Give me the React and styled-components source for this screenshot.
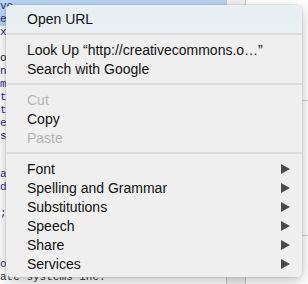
import React from "react";
import styled, { createGlobalStyle } from "styled-components";

const Global = createGlobalStyle`
  html, body { margin: 0; padding: 0; background: #ffffff; }
  #root { width: 308px; height: 284px; }
`;

const Screen = styled.div`
  position: relative;
  width: 308px;
  height: 284px;
  overflow: hidden;
  display: grid;
  grid-template-columns: 226px 20px 1fr;
  background: #ffffff;
`;

const Editor = styled.div`
  display: flex;
  flex-direction: column;
  font-family: "Liberation Mono", "DejaVu Sans Mono", monospace;
  font-size: 11px;
  line-height: 13px;
  white-space: pre;
  overflow: hidden;
`;

const CodeLine = styled.div`
  color: ${(p) => p.$color || "#2a2a8a"};
  background: ${(p) => (p.$selected ? "#b9d6f5" : "transparent")};
  height: 13px;
`;

const Gutter = styled.div`
  background: #f2f2f2;
  border-left: 1px solid #c8c8c8;
  border-right: 1px solid #c8c8c8;
`;

const Side = styled.div`
  display: flex;
  flex-direction: column;
  padding: 16px 0 0 6px;
  font-family: "Liberation Sans", Arial, sans-serif;
  color: #222;
  white-space: nowrap;
  overflow: hidden;
`;

const SideText = styled.div`
  color: ${(p) => p.$color || "#222"};
  margin-top: ${(p) => p.$mt || 0}px;
  font-size: ${(p) => p.$size || 12}px;
  line-height: ${(p) => (p.$size || 12) + 2}px;
  border-top: ${(p) => (p.$rule ? "1px solid #d0d0d0" : "none")};
`;

const Menu = styled.div`
  position: absolute;
  left: 6px;
  top: 5px;
  width: 296px;
  height: 272px;
  box-sizing: border-box;
  padding: 4px 0;
  border-radius: 5px;
  background: linear-gradient(
    to bottom,
    #e7eff2 0px,
    #eaf0f2 29px,
    #efefef 31px,
    #efefef 100%
  );
  box-shadow: 0 0 0 0.5px rgba(0, 0, 0, 0.12), 0 4px 14px rgba(0, 0, 0, 0.25);
  font-family: "Liberation Sans", Helvetica, Arial, sans-serif;
  font-size: 14px;
  display: flex;
  flex-direction: column;
`;

const Item = styled.div`
  height: 19px;
  display: flex;
  align-items: center;
  justify-content: space-between;
  padding: 0 12px 0 21px;
  color: ${(p) => (p.$disabled ? "#b3b3b3" : "#111111")};
  white-space: nowrap;
`;

const Separator = styled.div`
  height: 12px;
  display: flex;
  align-items: center;
  &::after {
    content: "";
    flex: 1;
    height: 2px;
    background: #dcdcdc;
  }
`;

const Arrow = () => (
  <svg width="9" height="10" viewBox="0 0 9 10">
    <path d="M0 0 L9 5 L0 10 Z" fill="#4a4a4a" />
  </svg>
);

const codeLines = [
  { t: "ve", sel: true },
  { t: "e ", sel: true },
  { t: "x3" },
  { t: "" },
  { t: "o ", c: "#222" },
  { t: "nd" },
  { t: "m]" },
  { t: "tb" },
  { t: "tf" },
  { t: "el" },
  { t: "s " },
  { t: "" },
  { t: "" },
  { t: "a " },
  { t: "dc" },
  { t: "" },
  { t: "; " },
  { t: "" },
  { t: "" },
  { t: "" },
  { t: "o " },
  { t: "ate systems inc.", c: "#333" },
];

const items = [
  [{ label: "Open URL" }],
  [{ label: "Look Up \u201chttp://creativecommons.o\u2026\u201d" }, { label: "Search with Google" }],
  [{ label: "Cut", disabled: true }, { label: "Copy" }, { label: "Paste", disabled: true }],
  [
    { label: "Font", sub: true },
    { label: "Spelling and Grammar", sub: true },
    { label: "Substitutions", sub: true },
    { label: "Speech", sub: true },
    { label: "Share", sub: true },
    { label: "Services", sub: true },
  ],
];

export default function App() {
  return (
    <>
      <Global />
      <Screen>
        <Editor>
          {codeLines.map((l, i) => (
            <CodeLine key={i} $selected={l.sel} $color={l.c}>
              {l.t}
            </CodeLine>
          ))}
        </Editor>
        <Gutter />
        <Side>
          <SideText>Need</SideText>
          <SideText>VPN</SideText>
          <SideText $mt={18}>Ver</SideText>
          <SideText $color="#2b62c7">…</SideText>
          <SideText $mt={10} $rule>Opt</SideText>
          <SideText>Set</SideText>
          <SideText $mt={20} $color="#999">opt</SideText>
          <SideText $mt={12} $size={16} $color="#1d3f7a">Pur</SideText>
          <SideText $mt={8}>Opt</SideText>
          <SideText $mt={20} $rule> </SideText>
          <SideText $mt={6}>User</SideText>
        </Side>
        <Menu>
          {items.map((group, gi) => (
            <React.Fragment key={gi}>
              {gi > 0 && <Separator />}
              {group.map((it) => (
                <Item key={it.label} $disabled={it.disabled}>
                  <span>{it.label}</span>
                  {it.sub && <Arrow />}
                </Item>
              ))}
            </React.Fragment>
          ))}
        </Menu>
      </Screen>
    </>
  );
}
